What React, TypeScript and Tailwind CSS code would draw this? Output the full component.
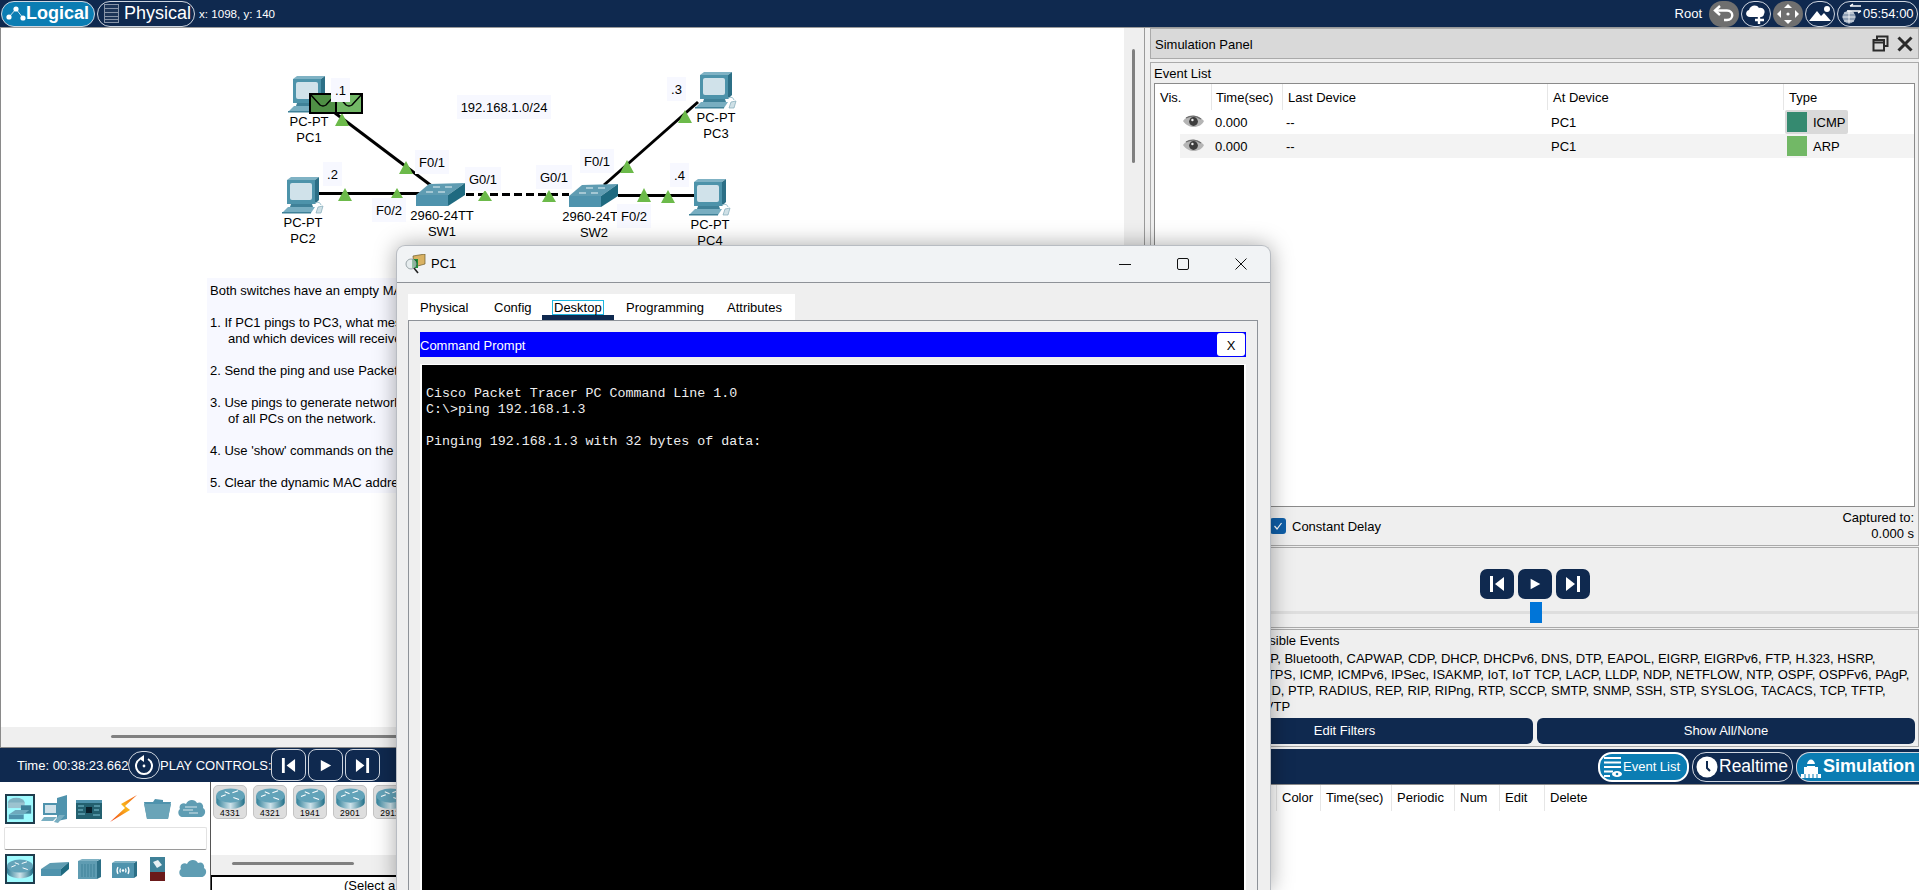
import React from 'react';

// packet tracer style device drawings
const Pc = ({ x, y }: { x: number; y: number }) => (
  <g transform={`translate(${x} ${y})`}>
    <polygon points="5,3 9,0 37,0 33,3" fill="#7fb2c4" />
    <polygon points="33,3 37,0 37,23 33,27" fill="#2c6f86" />
    <rect x="5" y="3" width="28" height="24" fill="#4d93aa" />
    <rect x="8" y="6" width="22" height="17" rx="2" fill="#d0e2ea" />
    <polygon points="9,27 30,27 31,30 8,30" fill="#3f8198" />
    <polygon points="6,30 33,30 29,36 0,36" fill="#78aec1" />
    <rect x="0" y="35" width="29" height="1.5" fill="#3f8198" />
    <path d="M33 26 q5 -2 6 2" stroke="#9cc0cc" strokeWidth="1" fill="none" />
    <polygon points="36,30 41,29 39,36 34,36" fill="#cfe0e6" stroke="#7fa9b8" strokeWidth="0.7" />
  </g>
);

const Switch = ({ x, y }: { x: number; y: number }) => (
  <g transform={`translate(${x} ${y})`}>
    <polygon points="0,12 13,1 49,0 32,12" fill="#5f9cb2" />
    <rect x="0" y="12" width="32" height="11" fill="#4f93ad" />
    <polygon points="32,12 49,0 49,12 32,23" fill="#1f6a80" />
    <path d="M17 4 h7 M29 4 h7 M10 9 h7 M22 9 h7" stroke="#e8f2f5" strokeWidth="1" />
  </g>
);

const Tri = ({ x, y, w = 14, h = 13 }: { x: number; y: number; w?: number; h?: number }) => (
  <polygon points={`${x},${y + h} ${x + w / 2},${y} ${x + w},${y + h}`} fill="#6cba4a" />
);

const Envelope = ({ x, fill }: { x: number; fill: string }) => (
  <g>
    <rect x={x} y="94" width="26" height="19" fill={fill} stroke="#000" strokeWidth="2" />
    <path d={`M${x} 94 L${x + 10} 105 Q${x + 13} 107 ${x + 16} 105 L${x + 26} 94`} fill="none" stroke="#000" strokeWidth="1.5" />
  </g>
);

const Router = ({ w = 30 }: { w?: number }) => (
  <svg width={w} height={w * 0.72} viewBox="0 0 30 22">
    <defs>
      <linearGradient id="routerBody" x1="0" x2="1" y1="0" y2="0">
        <stop offset="0" stopColor="#2f7f98" />
        <stop offset="0.5" stopColor="#cfe3ea" />
        <stop offset="1" stopColor="#1f6f88" />
      </linearGradient>
    </defs>
    <path d="M0 8 V15 C0 19 7 22 15 22 C23 22 30 19 30 15 V8 Z" fill="url(#routerBody)" />
    <ellipse cx="15" cy="8" rx="15" ry="7.5" fill="#63a3b9" />
    <path d="M5 9 l5 -2 M9 4 l5 2 M17 5 l6 -2 M18 10 l6 2" stroke="#fff" strokeWidth="1.1" fill="none" />
  </svg>
);

const CloudShape = ({ lines }: { lines?: boolean }) => (
  <svg width="29" height="20" viewBox="0 0 29 20">
    <path d="M6 18 C1 18 0 12 3 10 C1 6 6 3 9 5 C11 0 18 0 20 4 C24 2 27 6 26 9 C30 11 28 18 23 18 Z" fill="#5f9db3" />
    {lines && <path d="M8 8 h12 M6 11 h10 M12 14 h9" stroke="#d5e6ec" strokeWidth="1.2" />}
  </svg>
);

const Eye = () => (
  <svg width="21" height="14" viewBox="0 0 21 14">
    <path d="M0 6 C4 0 15 -1 21 6 C18 13 6 15 0 6 Z" fill="#b5b5b5" />
    <path d="M3 3 C8 0 14 1 18 4" stroke="#6f6f6f" strokeWidth="1.4" fill="none" />
    <circle cx="10.5" cy="6.5" r="4.4" fill="#3d3d3d" />
    <circle cx="9.4" cy="5" r="1.2" fill="#eee" />
  </svg>
);

const SkipBack = ({ h = 16 }: { h?: number }) => (
  <svg width={h} height={h} viewBox="0 0 16 16">
    <rect x="1" y="0" width="3" height="16" fill="#fff" />
    <polygon points="15,1 6,8 15,15" fill="#fff" />
  </svg>
);
const Play = ({ h = 16 }: { h?: number }) => (
  <svg width={h} height={h} viewBox="0 0 16 16">
    <polygon points="3,2 14,8 3,14" fill="#fff" />
  </svg>
);
const SkipForward = ({ h = 16 }: { h?: number }) => (
  <svg width={h} height={h} viewBox="0 0 16 16">
    <polygon points="1,1 10,8 1,15" fill="#fff" />
    <rect x="12" y="0" width="3" height="16" fill="#fff" />
  </svg>
);

const RoundIcon = ({ active, children }: { active?: boolean; children: React.ReactNode }) => (
  <div className={`flex h-[26px] w-[30px] items-center justify-center rounded-full ${active ? 'bg-[#6f6f6f]' : 'border border-[#cfd6e0]'}`}>
    {children}
  </div>
);

const instructions = [
  'Both switches have an empty MAC address table.',
  '',
  '1. If PC1 pings to PC3, what messages will be sent,',
  '     and which devices will receive them?',
  '',
  '2. Send the ping and use Packet Tracer to check.',
  '',
  '3. Use pings to generate network traffic, then learn the MAC',
  '     of all PCs on the network.',
  '',
  "4. Use 'show' commands on the switches.",
  '',
  '5. Clear the dynamic MAC address tables.',
];

const Topbar = () => (
  <div className="flex h-[27px] shrink-0 items-center justify-between bg-[#0f294f] text-white">
    <div className="flex items-center">
      <div className="ml-[1px] flex h-[26px] w-[94px] items-center rounded-[13px] border border-[#cfd6e0] bg-[#0b7db3] pl-[4px]">
        <svg width="20" height="18" viewBox="0 0 20 18">
          <path d="M3 12 L10 4 L17 13" stroke="#cfe5ef" strokeWidth="1" fill="none" />
          <circle cx="3" cy="12" r="2.6" fill="#fff" />
          <circle cx="10" cy="4" r="2.6" fill="#fff" />
          <circle cx="17" cy="13" r="2.6" fill="#fff" />
        </svg>
        <span className="text-[18px] font-bold">Logical</span>
      </div>
      <div className="ml-[2px] flex h-[26px] w-[98px] items-center gap-[5px] rounded-[13px] border border-[#cfd6e0] pl-[6px]">
        <svg width="15" height="19" viewBox="0 0 15 19">
          <rect x="0.5" y="0.5" width="14" height="18" fill="#1d3558" stroke="#8794a8" />
          <path d="M1 4.5 H14 M1 8.5 H14 M1 12.5 H14 M1 15.5 H14" stroke="#8794a8" />
        </svg>
        <span className="text-[18px]">Physical</span>
      </div>
      <span className="ml-[4px] text-[11.6px]">x: 1098, y: 140</span>
    </div>
    <div className="flex items-center gap-[2px] pr-[1px]">
      <span className="mr-[5px] text-[13px]">Root</span>
      <RoundIcon active>
        <svg width="22" height="18" viewBox="0 0 22 18">
          <path d="M7 1 L2 5.5 L7 10" stroke="#fff" strokeWidth="2.4" fill="none" />
          <path d="M3 5.5 H14 C21 5.5 21 15 14 15 H11" stroke="#fff" strokeWidth="2.4" fill="none" />
        </svg>
      </RoundIcon>
      <RoundIcon>
        <svg width="22" height="20" viewBox="0 0 22 20">
          <path d="M5 13 C0 13 0 7 4 6 C5 1 12 0 14 4 C18 3 21 7 19 10 C19 12 17 13 16 13 Z" fill="#fff" />
          <path d="M14 10 V20 M10 16 H19" stroke="#fff" strokeWidth="2.4" />
        </svg>
      </RoundIcon>
      <RoundIcon active>
        <svg width="22" height="20" viewBox="0 0 22 20">
          <polygon points="11,0 15,4 7,4" fill="#fff" />
          <polygon points="11,20 15,16 7,16" fill="#fff" />
          <polygon points="0,10 4,6 4,14" fill="#fff" />
          <polygon points="22,10 18,6 18,14" fill="#fff" />
          <circle cx="11" cy="10" r="1.6" fill="#fff" />
        </svg>
      </RoundIcon>
      <RoundIcon>
        <svg width="22" height="18" viewBox="0 0 22 18">
          <polygon points="0,16 8,6 12,11 15,8 22,16" fill="#fff" />
          <circle cx="18" cy="4" r="3" fill="#fff" />
        </svg>
      </RoundIcon>
      <div className="flex h-[26px] w-[81px] items-center rounded-full border border-[#cfd6e0] pl-[3px]">
        <svg width="21" height="22" viewBox="0 0 21 22">
          <circle cx="8" cy="14" r="6.5" fill="#8fa0b5" />
          <path d="M1.5 14 H14.5 M8 7.5 V20.5 M3 10 H13 M3 18 H13" stroke="#fff" strokeWidth="0.8" />
          <path d="M9 3 H20 M9 3 l3 -2 M6 8 H20 M20 8 l-3 2" stroke="#fff" strokeWidth="1.4" fill="none" />
        </svg>
        <span className="ml-[1px] text-[13px]">05:54:00</span>
      </div>
    </div>
  </div>
);

const Canvas = () => (
  <div className="relative flex-1 bg-white">
    <svg className="absolute inset-0" width="1124" height="699" viewBox="0 0 1124 699">
      <g transform="translate(0 -28)">
        <line x1="334" y1="113" x2="432" y2="187" stroke="#000" strokeWidth="3" />
        <line x1="318" y1="193.5" x2="420" y2="193.5" stroke="#000" strokeWidth="3" />
        <line x1="465" y1="194.5" x2="568" y2="194.5" stroke="#000" strokeWidth="3" strokeDasharray="8 4" />
        <line x1="603" y1="185" x2="697" y2="102" stroke="#000" strokeWidth="3" />
        <line x1="617" y1="195.5" x2="694" y2="195.5" stroke="#000" strokeWidth="3" />
        <Pc x={287} y={76} />
        <Pc x={281} y={177} />
        <Pc x={694} y={72} />
        <Pc x={688} y={179} />
        <Switch x={415} y={183} />
        <Switch x={568} y={184} />
        <Tri x={334} y={113} />
        <Tri x={398} y={161} />
        <Tri x={337} y={188} />
        <Tri x={390} y={188} w={12} h={10} />
        <Tri x={477} y={190} h={11} />
        <Tri x={541} y={190} h={12} />
        <Tri x={619} y={160} />
        <Tri x={677} y={110} />
        <Tri x={636} y={188} h={14} />
        <Tri x={660} y={190} />
        <Envelope x={309} fill="#4f8f45" />
        <Envelope x={335} fill="#72b866" />
      </g>
    </svg>

    <div className="absolute left-[330px] top-[50px] flex h-[24px] w-[19px] items-center justify-center bg-[#f7f8ff] pt-[2px]">.1</div>
    <div className="absolute left-[322px] top-[134px] flex h-[24px] w-[19px] items-center justify-center bg-[#f7f8ff] pt-[2px]">.2</div>
    <div className="absolute left-[666px] top-[49px] flex h-[24px] w-[19px] items-center justify-center bg-[#f7f8ff] pt-[2px]">.3</div>
    <div className="absolute left-[669px] top-[135px] flex h-[24px] w-[19px] items-center justify-center bg-[#f7f8ff] pt-[2px]">.4</div>
    <div className="absolute left-[456px] top-[67px] flex h-[24px] w-[94px] items-center justify-center bg-[#f7f8ff] pt-[2px]">192.168.1.0/24</div>
    <div className="absolute left-[414px] top-[122px] flex h-[24px] w-[34px] items-center justify-center bg-[#f7f8ff] pt-[2px]">F0/1</div>
    <div className="absolute left-[371px] top-[170px] flex h-[24px] w-[34px] items-center justify-center bg-[#f7f8ff] pt-[2px]">F0/2</div>
    <div className="absolute left-[464px] top-[139px] flex h-[24px] w-[36px] items-center justify-center bg-[#f7f8ff] pt-[2px]">G0/1</div>
    <div className="absolute left-[535px] top-[137px] flex h-[24px] w-[36px] items-center justify-center bg-[#f7f8ff] pt-[2px]">G0/1</div>
    <div className="absolute left-[579px] top-[121px] flex h-[24px] w-[34px] items-center justify-center bg-[#f7f8ff] pt-[2px]">F0/1</div>

    <div className="absolute left-[268px] top-[86px] w-[80px] text-center leading-[16px]">PC-PT<br />PC1</div>
    <div className="absolute left-[262px] top-[187px] w-[80px] text-center leading-[16px]">PC-PT<br />PC2</div>
    <div className="absolute left-[401px] top-[180px] w-[80px] text-center leading-[16px]">2960-24TT<br />SW1</div>
    <div className="absolute left-[553px] top-[181px] w-[80px] text-center leading-[16px]">2960-24TT<br />SW2</div>
    <div className="absolute left-[616px] top-[176px] flex h-[24px] w-[34px] items-center justify-center bg-[#f7f8ff] pt-[2px]">F0/2</div>
    <div className="absolute left-[675px] top-[82px] w-[80px] text-center leading-[16px]">PC-PT<br />PC3</div>
    <div className="absolute left-[669px] top-[189px] w-[80px] text-center leading-[16px]">PC-PT<br />PC4</div>

    <div className="absolute left-[206px] top-[250px] w-[500px] bg-[#f7f8ff] pb-[2px] pl-[3px] pt-[5px] leading-[16px]">
      {instructions.map((line, i) => (
        <div key={i} className="h-[16px] whitespace-pre">{line}</div>
      ))}
    </div>
  </div>
);

const catTile = 'flex h-[30px] w-[30px] items-center justify-center border-2 border-[#1f3d4d] bg-[#9ffbff]';

const DevicePanel = () => (
  <div className="flex h-[108px] bg-white">
    <div className="w-[210px] shrink-0 pl-[5px] pt-[12px]">
      <div className="flex h-[30px] items-center">
        <div className={catTile}>
          <svg width="28" height="26" viewBox="0 0 28 26">
            <ellipse cx="10" cy="6" rx="9" ry="5" fill="#7fb0c0" />
            <rect x="1" y="6" width="18" height="6" fill="#9cc3cf" />
            <rect x="15" y="9" width="11" height="9" fill="#3f8198" />
            <polygon points="2,19 9,14 24,14 18,19" fill="#6fa9bd" />
            <rect x="2" y="19" width="16" height="5" fill="#4f93ad" />
          </svg>
        </div>
        <svg className="ml-[6px]" width="28" height="28" viewBox="0 0 28 28">
          <polygon points="16,3 26,0 26,24 16,26" fill="#4f93ad" />
          <rect x="2" y="8" width="15" height="12" fill="#4f93ad" />
          <rect x="4" y="10" width="11" height="8" fill="#d0e2ea" />
          <polygon points="3,22 16,22 12,26 0,26" fill="#78aec1" />
          <polygon points="18,20 24,20 17,28 13,27" fill="#78aec1" />
        </svg>
        <svg className="ml-[7px]" width="26" height="19" viewBox="0 0 26 19">
          <rect width="26" height="19" fill="#23606f" />
          <rect x="0" y="0" width="26" height="3" fill="#4f93ad" />
          <rect x="10" y="7" width="6" height="6" fill="#0a1f2a" />
          <path d="M2 6 h6 M2 10 h5 M2 14 h7 M18 6 h6 M18 10 h5 M17 15 h7" stroke="#7fc3d5" strokeWidth="1" />
        </svg>
        <svg className="ml-[8px]" width="28" height="28" viewBox="0 0 28 28">
          <defs>
            <linearGradient id="bolt" x1="0" x2="1" y1="1" y2="0">
              <stop offset="0" stopColor="#f03a1a" />
              <stop offset="0.55" stopColor="#f9b51a" />
              <stop offset="1" stopColor="#f0561a" />
            </linearGradient>
          </defs>
          <polygon points="27,0 11,9 15,13 0,27 20,15 15,11" fill="url(#bolt)" />
        </svg>
        <svg className="ml-[6px]" width="27" height="20" viewBox="0 0 27 20">
          <polygon points="0,3 9,3 11,0 19,1 19,3 27,3 24,20 3,20" fill="#4f93ad" />
          <polygon points="0,5 27,5 24,20 3,20" fill="#6aa4b8" />
        </svg>
        <div className="ml-[6px]"><CloudShape lines /></div>
      </div>
      <div className="-ml-[1px] mt-[3px] h-[23px] w-[203px] rounded-[2px] border border-[#e2e2e2] border-b-[#9a9a9a]" />
      <div className="mt-[4px] flex h-[30px] items-center">
        <div className={catTile}><Router w={27} /></div>
        <svg className="ml-[6px]" width="28" height="14" viewBox="0 0 28 14">
          <polygon points="0,7 9,1 28,0 20,7" fill="#5f9cb2" />
          <rect y="7" width="20" height="7" fill="#4f93ad" />
          <polygon points="20,7 28,0 28,7 20,14" fill="#1f6a80" />
        </svg>
        <svg className="ml-[9px]" width="23" height="20" viewBox="0 0 23 20">
          <rect y="2" width="19" height="18" fill="#5f9cb2" />
          <polygon points="19,2 23,0 23,18 19,20" fill="#2c6f86" />
          <polygon points="0,2 4,0 23,0 19,2" fill="#7fb2c4" />
          <path d="M4 5 V18 M7 5 V18 M10 5 V18 M13 5 V18 M16 5 V18" stroke="#3f8198" strokeWidth="1" />
        </svg>
        <svg className="ml-[11px]" width="25" height="17" viewBox="0 0 25 17">
          <rect y="2" width="22" height="15" fill="#4f93ad" />
          <polygon points="22,2 25,0 25,15 22,17" fill="#2c6f86" />
          <polygon points="0,2 3,0 25,0 22,2" fill="#7fb2c4" />
          <path d="M6 6 Q4 9.5 6 13 M16 6 Q18 9.5 16 13 M8.5 7.5 Q7.5 9.5 8.5 11.5 M13.5 7.5 Q14.5 9.5 13.5 11.5" stroke="#fff" strokeWidth="1.2" fill="none" />
          <circle cx="11" cy="9.5" r="1.2" fill="#fff" />
        </svg>
        <svg className="ml-[13px]" width="15" height="24" viewBox="0 0 15 24">
          <rect width="15" height="15" fill="#3f8198" />
          <rect y="15" width="15" height="9" fill="#6b1a1a" />
          <path d="M3 5 L8 3 L12 8 L7 11 Z" fill="#e8f0f3" />
        </svg>
        <div className="ml-[13px]"><CloudShape /></div>
      </div>
    </div>
    <div className="flex flex-1 flex-col overflow-hidden border-l border-[#555]">
      <div className="flex h-[73px] shrink-0 gap-[6px] pl-[2px] pt-[3px]">
        {['4331', '4321', '1941', '2901', '2911'].map(name => (
          <div key={name} className="flex h-[34px] w-[34px] shrink-0 flex-col items-center rounded-[5px] border border-[#c4c4c4] bg-[#dedede] pt-[2px]">
            <Router w={29} />
            <span className="mt-[-1px] text-[8.5px] leading-[10px] tracking-[0.3px]">{name}</span>
          </div>
        ))}
      </div>
      <div className="h-[20px] shrink-0 bg-[#efefef] pt-[7px]">
        <div className="ml-[21px] h-[3px] w-[122px] rounded-full bg-[#808080]" />
      </div>
      <div className="min-h-0 flex-1 overflow-hidden border-l-[1px] border-t-2 border-black pl-[132px] pt-[1px] leading-[16px]">(Select a Device to Drag and Drop to the Workspace)</div>
    </div>
  </div>
);

const TimeBar = () => (
  <div className="flex h-[34px] shrink-0 items-center bg-[#0f294f] pl-[17px] text-white">
    <span className="w-[111px] whitespace-nowrap pt-[2px]">Time: 00:38:23.662</span>
    <div className="flex h-[28px] w-[32px] items-center justify-center rounded-full border border-[#cfd6e0]">
      <svg width="20" height="20" viewBox="0 0 20 20">
        <path d="M6 4 A8 8 0 1 0 14 4" stroke="#fff" strokeWidth="2" fill="none" />
        <polygon points="10,0 10,7 5,3.5" fill="#fff" />
        <circle cx="10" cy="11" r="1.4" fill="#fff" />
      </svg>
    </div>
    <span className="w-[109px] whitespace-nowrap pt-[2px]">PLAY CONTROLS:</span>
    <div className="ml-[2px] flex gap-[2px]">
      {[<SkipBack h={15} />, <Play h={15} />, <SkipForward h={15} />].map((icon, i) => (
        <div key={i} className="flex h-[32px] w-[35px] items-center justify-center rounded-[8px] border border-[#cfd6e0]">{icon}</div>
      ))}
    </div>
  </div>
);

const LeftColumn = () => (
  <div className="flex w-[1144px] shrink-0 flex-col border-t border-[#9a9a9a]">
    <div className="flex h-[699px] border-l border-[#8a8a8a]">
      <Canvas />
      <div className="w-[20px] bg-[#efefef] pl-[8px] pt-[21px]">
        <div className="h-[114px] w-[3px] rounded-full bg-[#808080]" />
      </div>
    </div>
    <div className="h-[21px] border-b border-l border-[#8a8a8a] bg-[#efefef] pt-[8px]">
      <div className="ml-[110px] h-[3px] w-[290px] rounded-full bg-[#808080]" />
    </div>
    <TimeBar />
    <DevicePanel />
  </div>
);

const events = [
  { color: 'bg-[#358a70]', type: 'ICMP', row: '', selected: 'bg-[#d9d9d9]' },
  { color: 'bg-[#72b866]', type: 'ARP', row: 'bg-[#f3f3f3]', selected: '' },
];

const EventTable = () => (
  <div className="mx-[3px] h-[424px] border border-[#8a8a8a] bg-white">
    <div className="flex h-[26px] items-center">
      <div className="h-[26px] w-[57px] border-r border-[#e6e6e6] pl-[5px] leading-[28px]">Vis.</div>
      <div className="h-[26px] w-[71px] border-r border-[#e6e6e6] pl-[4px] leading-[28px]">Time(sec)</div>
      <div className="h-[26px] w-[265px] border-r border-[#e6e6e6] pl-[5px] leading-[28px]">Last Device</div>
      <div className="h-[26px] w-[236px] border-r border-[#e6e6e6] pl-[5px] leading-[28px]">At Device</div>
      <div className="h-[26px] flex-1 pl-[5px] leading-[28px]">Type</div>
    </div>
    {events.map(ev => (
      <div key={ev.type} className={`ml-[25px] flex h-[24px] items-start ${ev.row}`}>
        <div className="w-[32px] pl-[3px] pt-[5px]"><Eye /></div>
        <div className="h-[24px] w-[71px] pl-[3px] leading-[26px]">0.000</div>
        <div className="h-[24px] w-[265px] pl-[3px] leading-[26px]">--</div>
        <div className="h-[24px] w-[236px] pl-[3px] leading-[26px]">PC1</div>
        <div className="flex-1 pl-[1px]">
          <div className={`flex h-[24px] w-[63px] items-center rounded-[2px] pl-[2px] ${ev.selected}`}>
            <div className={`h-[20px] w-[20px] ${ev.color}`} />
            <span className="ml-[6px] pt-[2px]">{ev.type}</span>
          </div>
        </div>
      </div>
    ))}
  </div>
);

const RightColumn = () => (
  <div className="flex min-w-0 flex-1 flex-col border-l border-t border-[#9a9a9a] bg-[#efefef]">
    <div className="ml-[5px] flex h-[31px] items-center justify-between border border-[#aaa] bg-[#d9d9d9] pl-[4px] pr-[5px]">
      <span className="pt-[2px]">Simulation Panel</span>
      <div className="flex items-center gap-[8px]">
        <svg width="17" height="17" viewBox="0 0 17 17">
          <path d="M5 5 V1.5 H15.5 V11 H12" stroke="#2b2b2b" strokeWidth="2" fill="none" />
          <rect x="1.5" y="5" width="10.5" height="10.5" stroke="#2b2b2b" strokeWidth="2" fill="none" />
          <path d="M1 7.5 H12" stroke="#2b2b2b" strokeWidth="2" />
        </svg>
        <svg width="16" height="16" viewBox="0 0 16 16">
          <path d="M1.5 1.5 L14.5 14.5 M14.5 1.5 L1.5 14.5" stroke="#2b2b2b" strokeWidth="3" />
        </svg>
      </div>
    </div>
    <div className="ml-[5px] mt-[3px] flex h-[484px] flex-col border border-[#aaa]">
      <div className="h-[20px] pl-[3px] leading-[22px]">Event List</div>
      <EventTable />
      <div className="flex flex-1 items-center justify-between pl-[119px] pr-[4px]">
        <div className="flex items-center gap-[6px]">
          <div className="flex h-[16px] w-[16px] items-center justify-center rounded-[3px] bg-[#0f5fa8]">
            <svg width="10" height="10" viewBox="0 0 10 10">
              <path d="M1.5 5 L4 8 L8.5 2" stroke="#fff" strokeWidth="1.2" fill="none" />
            </svg>
          </div>
          <span className="pt-[2px]">Constant Delay</span>
        </div>
        <div className="text-right leading-[16px]">Captured to:<br />0.000 s</div>
      </div>
    </div>
    <div className="ml-[5px] mt-[1px] flex h-[81px] flex-col items-center border border-[#aaa]">
      <div className="mt-[21px] flex gap-[4px]">
        {[<SkipBack h={16} />, <Play h={14} />, <SkipForward h={16} />].map((icon, i) => (
          <div key={i} className="flex h-[30px] w-[34px] items-center justify-center rounded-[7px] bg-[#0f294f]">{icon}</div>
        ))}
      </div>
      <div className="relative mt-[12px] h-[3px] w-full bg-[#dedede]">
        <div className="absolute left-[379px] top-[-9px] h-[21px] w-[12px] bg-[#0075d8]" />
      </div>
    </div>
    <div className="ml-[5px] mt-[1px] flex h-[118px] flex-col overflow-hidden border border-[#aaa] pl-[5px]">
      <div className="ml-[102px] mt-[3px] h-[16px] leading-[16px]">Visible Events</div>
      <div className="mt-[2px] leading-[16px]">
        <div className="whitespace-nowrap">ACL Filter, ARP, BGP, Bluetooth, CAPWAP, CDP, DHCP, DHCPv6, DNS, DTP, EAPOL, EIGRP, EIGRPv6, FTP, H.323, HSRP,</div>
        <div className="-ml-[3px] whitespace-nowrap">HSRPv6, HTTP, HTTPS, ICMP, ICMPv6, IPSec, ISAKMP, IoT, IoT TCP, LACP, LLDP, NDP, NETFLOW, NTP, OSPF, OSPFv6, PAgP,</div>
        <div className="whitespace-nowrap">POP3, PPP, PPPoED, PTP, RADIUS, REP, RIP, RIPng, RTP, SCCP, SMTP, SNMP, SSH, STP, SYSLOG, TACACS, TCP, TFTP,</div>
        <div className="whitespace-nowrap">Telnet, UDP, USB, VTP</div>
      </div>
      <div className="mt-[3px] flex gap-[4px] pr-[3px] text-white">
        <div className="flex h-[26px] flex-1 items-center justify-center rounded-[6px] bg-[#0f294f]">Edit Filters</div>
        <div className="flex h-[26px] w-[378px] items-center justify-center rounded-[6px] bg-[#0f294f]">Show All/None</div>
      </div>
    </div>
    <div className="mt-[2px] flex h-[35px] shrink-0 items-center justify-end bg-[#0f294f] text-white">
      <div className="flex h-[30px] w-[91px] items-center rounded-[14px] border-2 border-white bg-[#0b7db3] pl-[3px]">
        <svg width="19" height="24" viewBox="0 0 19 24">
          <path d="M1 3 H18 M1 7.5 H18 M1 12 H18 M1 16.5 H10 M1 21 H7" stroke="#fff" strokeWidth="2" />
          <ellipse cx="14" cy="19" rx="5" ry="3" fill="#fff" />
          <circle cx="14" cy="19" r="1.3" fill="#0b7db3" />
        </svg>
        <span className="ml-[1px] whitespace-nowrap">Event List</span>
      </div>
      <div className="ml-[3px] flex h-[30px] w-[101px] items-center rounded-[14px] border border-[#cfd6e0] pl-[3px]">
        <svg width="22" height="22" viewBox="0 0 22 22">
          <circle cx="11" cy="11" r="10.5" fill="#fff" />
          <path d="M11 5 V12 L14 15" stroke="#0f294f" strokeWidth="2" fill="none" />
        </svg>
        <span className="ml-[1px] text-[17.5px]">Realtime</span>
      </div>
      <div className="ml-[3px] flex h-[30px] w-[123px] items-center rounded-l-[14px] border border-r-0 border-[#cfd6e0] bg-[#0b7db3] pl-[3px]">
        <svg width="22" height="24" viewBox="0 0 22 24">
          <path d="M7 12 C6 2 16 2 15 12 Z" fill="#fff" />
          <rect x="4" y="12" width="14" height="7" fill="#fff" />
          <rect x="7" y="9" width="8" height="2" fill="#0b7db3" />
          <rect x="1" y="19" width="20" height="4" fill="#fff" />
          <path d="M5 19 V23 M9 19 V23 M13 19 V23 M17 19 V23" stroke="#0b7db3" strokeWidth="1" />
        </svg>
        <span className="ml-[1px] text-[18px] font-bold">Simulation</span>
      </div>
    </div>
    <div className="flex-1 border-t border-[#8a8a8a] bg-white">
      <div className="flex h-[26px] pl-[131px]">
        <div className="w-[45px] border-l border-r border-[#e6e6e6] pl-[5px] leading-[26px]">Color</div>
        <div className="w-[71px] border-r border-[#e6e6e6] pl-[5px] leading-[26px]">Time(sec)</div>
        <div className="w-[63px] border-r border-[#e6e6e6] pl-[5px] leading-[26px]">Periodic</div>
        <div className="w-[45px] border-r border-[#e6e6e6] pl-[5px] leading-[26px]">Num</div>
        <div className="w-[45px] border-r border-[#e6e6e6] pl-[5px] leading-[26px]">Edit</div>
        <div className="w-[60px] pl-[5px] leading-[26px]">Delete</div>
      </div>
    </div>
  </div>
);

const Pc1Window = () => (
  <div className="absolute left-[396px] top-[245px] flex h-[645px] w-[875px] flex-col rounded-t-[9px] border border-b-0 border-[#b8bcc2] bg-[#f1f3f5] shadow-[0_0_22px_rgba(0,0,0,0.35)]">
    <div className="flex h-[36px] shrink-0 items-center">
      <svg className="ml-[8px]" width="21" height="20" viewBox="0 0 21 20">
        <polygon points="8,2 20,0 20,10 9,13" fill="#d9b263" stroke="#6b5a2a" strokeWidth="0.7" />
        <rect x="7" y="5" width="6" height="9" fill="#1f8a3a" />
        <path d="M8 7 h4 M8 9 h4 M8 11 h4" stroke="#0b4a1c" strokeWidth="0.8" />
        <circle cx="6" cy="10" r="5" fill="#dfe7ea" fillOpacity="0.6" stroke="#9aa5a9" />
        <path d="M9 14 L13 19" stroke="#222" strokeWidth="1.6" />
      </svg>
      <span className="ml-[5px]">PC1</span>
      <div className="ml-auto flex items-center pb-[1px]">
        <svg width="12" height="12" viewBox="0 0 12 12"><path d="M0 6.5 H12" stroke="#111" /></svg>
        <svg className="ml-[46px]" width="12" height="12" viewBox="0 0 12 12"><rect x="0.5" y="0.5" width="11" height="11" rx="1.5" fill="none" stroke="#111" /></svg>
        <svg className="ml-[46px] mr-[23px]" width="12" height="12" viewBox="0 0 12 12"><path d="M0.5 0.5 L11.5 11.5 M11.5 0.5 L0.5 11.5" stroke="#111" /></svg>
      </div>
    </div>
    <div className="flex flex-1 flex-col border-t border-[#8e9298] bg-[#efefef] pl-[11px] pr-[12px] pt-[11px]">
      <div className="flex h-[26px] w-[387px] shrink-0 bg-white">
        <div className="w-[74px] pl-[12px] leading-[28px]">Physical</div>
        <div className="w-[60px] pl-[12px] leading-[28px]">Config</div>
        <div className="h-[26px] w-[72px] border-b-[5px] border-[#0f294f] pl-[10px] pt-[6px]">
          <span className="block h-[15px] w-[52px] border border-[#1fb6e0] pl-[1px] leading-[14px]">Desktop</span>
        </div>
        <div className="w-[101px] pl-[12px] leading-[28px]">Programming</div>
        <div className="pl-[12px] leading-[28px]">Attributes</div>
      </div>
      <div className="flex flex-1 flex-col border-l border-r border-t border-[#8e9298] px-[11px] pt-[11px]">
        <div className="flex h-[25px] shrink-0 items-center justify-between bg-[#0000ff] text-white">
          <span className="pt-[2px]">Command Prompt</span>
          <div className="mr-[1px] flex h-[23px] w-[28px] items-center justify-center rounded-[3px] bg-white pt-[2px] text-[#000]">X</div>
        </div>
        <div className="mt-[7px] flex-1 border-x-2 border-t border-white bg-black pl-[4px] pt-[21px] font-['Liberation_Mono',monospace] text-[13.3px] leading-[16px] text-[#eeeeee]">
          <div>Cisco Packet Tracer PC Command Line 1.0</div>
          <div>C:\&gt;ping 192.168.1.3</div>
          <div className="h-[16px]" />
          <div>Pinging 192.168.1.3 with 32 bytes of data:</div>
        </div>
      </div>
    </div>
  </div>
);

export default function App() {
  return (
    <div className="relative flex h-[890px] w-full flex-col overflow-hidden bg-white font-['Liberation_Sans',Arial,sans-serif] text-[13px] text-black">
      <Topbar />
      <div className="flex flex-1">
        <LeftColumn />
        <RightColumn />
      </div>
      <Pc1Window />
    </div>
  );
}
